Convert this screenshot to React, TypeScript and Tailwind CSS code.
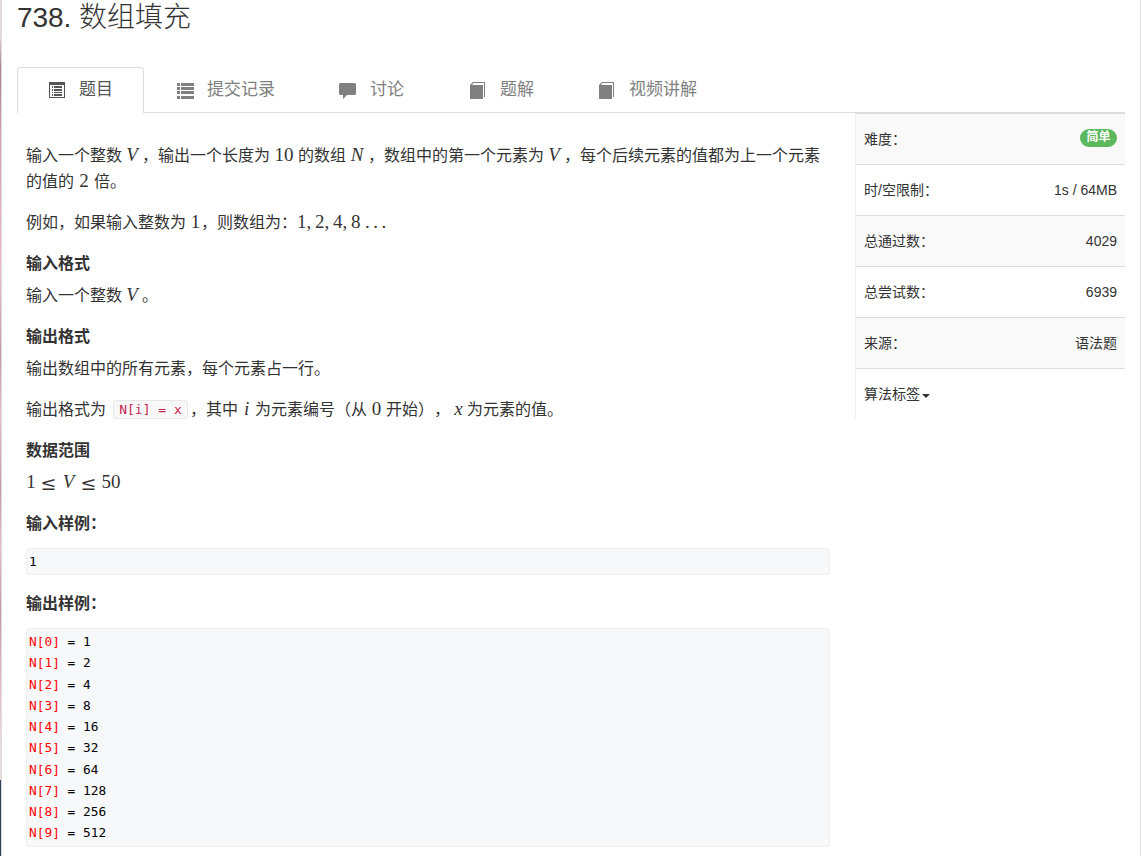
import type { ReactNode } from 'react';

const tabs = [
  { name: '题目', icon: 'list-alt', className: 'w-[127px] pl-[30px]' },
  { name: '提交记录', icon: 'list', className: 'w-[163px] pl-8' },
  { name: '讨论', icon: 'comment', className: 'w-[130px] pl-8' },
  { name: '题解', icon: 'book', className: 'w-[129px] pl-8' },
  { name: '视频讲解', icon: 'book', className: 'w-[163px] pl-8' },
];

const info = [
  { label: '时/空限制：', value: '1s / 64MB' },
  { label: '总通过数：', value: '4029' },
  { label: '总尝试数：', value: '6939' },
  { label: '来源：', value: '语法题' },
];

const output = [1, 2, 4, 8, 16, 32, 64, 128, 256, 512];

function Icon({ name }: { name: string }) {
  return (
    <svg className="mt-[13px] h-[18px] w-[18px] shrink-0" viewBox="0 0 18 18" fill="currentColor">
      {name === 'list-alt' && (
        <path fillRule="evenodd" d="M1 1h16v16H1zM2 4v12h14V4zM4 5h1v2H4zM6 5h8v2H6zM4 8h1v2H4zM6 8h8v2H6zM4 11h1v1H4zM6 11h8v1H6zM4 13h1v2H4zM6 13h8v2H6z" />
      )}
      {name === 'list' && (
        <path d="M1 2h3v3H1zM5 2h13v3H5zM1 6h3v3H1zM5 6h13v3H5zM1 10h3v3H1zM5 10h13v3H5zM1 15h3v3H1zM5 15h13v3H5z" />
      )}
      {name === 'comment' && (
        <path d="M1.500 2h14q1.500 0 1.500 1.500v9q0 1.500-1.500 1.500H8l-4 4v-4H1.500Q0 14 0 12.500v-9Q0 2 1.500 2z" />
      )}
      {name === 'book' && (
        <path d="M4 1h12v15h-1V2H4.500L3 4h11v14H1V4z" />
      )}
    </svg>
  );
}

// inline formula with a fixed advance
function M({ w, it, children }: { w: string; it?: boolean; children: ReactNode }) {
  return (
    <span className={`inline-block text-center font-['Liberation_Serif'] text-[19px] leading-[20px] ${w} ${it ? 'italic' : ''}`}>
      {children}
    </span>
  );
}

function Le() {
  return <span className="inline-block w-[25px] text-center align-[-2px] font-['DejaVu_Serif'] text-[19px] leading-[20px]">≤</span>;
}

function P({ className, children }: { className: string; children: ReactNode }) {
  return <p className={`leading-[26px] whitespace-nowrap ${className}`}>{children}</p>;
}

function Title({ className = 'mt-[15px]', children }: { className?: string; children: ReactNode }) {
  return <h4 className={`h-[26px] font-bold leading-[26px] ${className}`}>{children}</h4>;
}

export default function App() {
  return (
    <div className="flex h-[856px] w-[1141px] overflow-hidden bg-white font-['Liberation_Sans','Noto_Sans_CJK_SC',sans-serif] text-[#333] [text-spacing-trim:space-all]">
      <div className="flex w-px flex-col">
        <div className="h-[780px] bg-[linear-gradient(#e6d8d8_35px,#a88090_68px,#d8a0ac_137px,#eebcc6_273px,#c498a6_355px,#eebcc6_415px,#c498a6_490px,#eebcc6_546px,#c498a6_612px,#e6bcc4_683px,#e6dada_748px)]" />
        <div className="flex-1 bg-[#2f4058]" />
      </div>
      <div className="flex-1 border-x border-[#ddd] pl-[15px]">
        <h1 className="h-[67px] text-[28px] font-light leading-[35px] tracking-[-0.05px] whitespace-pre">738. 数组填充</h1>
        <div className="flex h-[46px] w-[1108px] border-b border-[#ddd] text-[17px]">
          {tabs.map((tab, i) => (
            <div
              key={tab.name}
              className={`flex gap-[13px] ${tab.className} ${i === 0 ? 'h-[46px] rounded-t border border-b-0 border-[#ddd] bg-white text-[#555]' : 'h-[45px] pt-px text-[#808080]'}`}
            >
              <Icon name={tab.icon} />
              <span className="leading-[44px] whitespace-nowrap">{tab.name}</span>
            </div>
          ))}
        </div>
        <div className="flex w-[1108px]">
          <div className="w-[838px] pt-[30px] pr-[25px] pl-[9px] text-[16px]">
            <P className="">
              输入一个整数<M w="w-[20px]" it>V</M>，输出一个长度为<M w="w-[28px]">10</M>的数组<M w="w-[22px]" it>N</M>，数组中的第一个元素为<M w="w-[20px]" it>V</M>，每个后续元素的值都为上一个元素
              <br />
              的值的<M w="w-[20px]">2</M>倍。
            </P>
            <P className="mt-[15px]">
              例如，如果输入整数为<M w="w-[15px] pl-1">1</M>，则数组为：<M w="w-[18px] text-left">1,</M><M w="w-[18px] text-left">2,</M><M w="w-[18px] text-left">4,</M><M w="w-[14px] text-left">8</M><M w="w-[24px] tracking-[3.5px]">...</M>
            </P>
            <Title>输入格式</Title>
            <P className="mt-[6px]">
              输入一个整数<M w="w-[20px]" it>V</M>。
            </P>
            <Title>输出格式</Title>
            <P className="mt-[6px]">输出数组中的所有元素，每个元素占一行。</P>
            <P className="mt-[15px] h-[26px]">
              输出格式为
              <code className="mr-[2px] ml-[7px] inline-block h-[19px] w-[75px] rounded-[3px] border border-[#e7e7e7] bg-[#f8f8f8] text-center align-[1px] font-['DejaVu_Sans_Mono'] text-[13px] leading-[17px] text-[#c7254e]">N[i] = x</code>
              ，其中<M w="w-[17px]" it>i</M>为元素编号（从<M w="w-[19px]">0</M>开始），<M w="w-[17px]" it>x</M>为元素的值。
            </P>
            <Title>数据范围</Title>
            <P className="mt-[6px] h-[26px]">
              <M w="w-[10px]">1</M><Le /><M w="w-[15px]" it>V</M><Le /><M w="w-[20px]">50</M>
            </P>
            <Title>输入样例：</Title>
            <pre className="mt-[11px] h-[27px] rounded-[3px] border border-[#eee] bg-[#f6f8fa] pl-[2px] font-['DejaVu_Sans_Mono'] text-[12.8px] leading-[25px] text-black">1</pre>
            <Title className="mt-[16px]">输出样例：</Title>
            <pre className="mt-[11px] h-[219px] rounded-[3px] border border-[#eee] bg-[#f6f8fa] pt-[2px] pl-[2px] font-['DejaVu_Sans_Mono'] text-[12.8px] leading-[21.25px] text-black">
              {output.map((value, i) => (
                <div key={i}>
                  <span className="text-[#f00]">N[{i}]</span> = {value}
                </div>
              ))}
            </pre>
          </div>
          <div className="h-[306px] w-[270px] border-l border-[#eee] text-[14px]">
            <div className="flex h-[51px] items-center justify-between border-t border-[#ddd] bg-[#f9f9f9] px-2">
              <span>难度：</span>
              <span className="mb-[3px] h-[18px] w-[37px] rounded-full bg-[#5cb85c] text-center text-[12px] font-bold leading-[17px] text-white">简单</span>
            </div>
            {info.map((row, i) => (
              <div key={row.label} className={`flex h-[51px] items-center justify-between border-t border-[#ddd] px-2 ${i % 2 ? 'bg-[#f9f9f9]' : 'bg-white'}`}>
                <span>{row.label}</span>
                <span>{row.value}</span>
              </div>
            ))}
            <div className="flex h-[51px] items-center border-t border-[#ddd] px-2">
              <span>算法标签</span>
              <span className="mt-[3px] ml-[2px] border-x-4 border-t-4 border-x-transparent border-t-[#333]" />
            </div>
          </div>
        </div>
      </div>
    </div>
  );
}
